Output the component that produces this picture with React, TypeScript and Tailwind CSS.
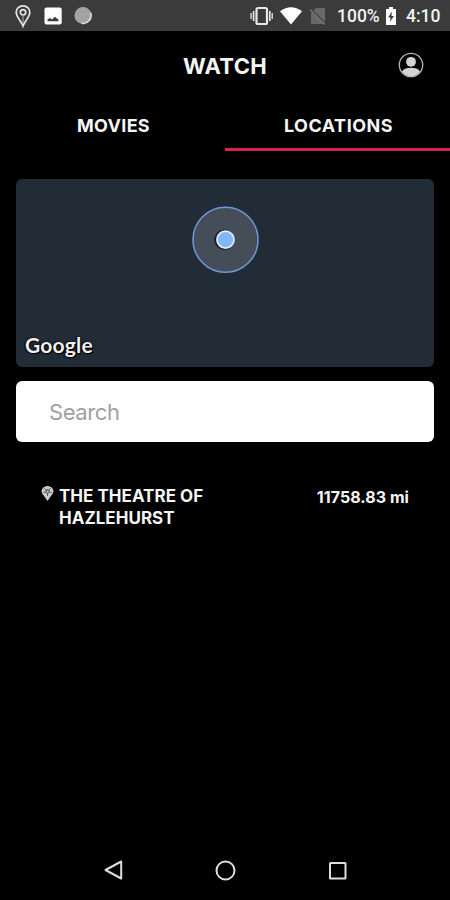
import React from "react";

function StatusBar() {
  return (
    <div className="flex h-[31px] shrink-0 items-center bg-[#3b3b3b] font-['Roboto',sans-serif] text-[17.5px] font-medium text-[#f2f2f2]">
      <svg className="ml-[14px] h-[24px] w-[18px] shrink-0" viewBox="0 0 18 24" fill="none" stroke="#e6e6e6" strokeWidth="1.7">
        <path d="M9 22C7.500 17.500 2.200 13 2.200 8.200a6.800 6.300 0 0 1 13.600 0C15.800 13 10.500 17.500 9 22Z" />
        <circle cx="9" cy="8.300" r="2.700" />
        <path d="M9 12V19" strokeWidth="0.700" />
      </svg>
      <svg className="ml-[12px] h-[18px] w-[18px] shrink-0" viewBox="0 0 18 18">
        <rect x="0.500" y="0.500" width="17.200" height="17" rx="2" fill="#fff" />
        <path d="M3.500 14.200V12.500L6 10.900l2 1.600 2.900-2.800 3.600 3V14.200Z" fill="#3b3b3b" />
      </svg>
      <svg className="ml-[11px] h-[20px] w-[20px] shrink-0" viewBox="0 0 20 20">
        <circle cx="10" cy="9.500" r="8.500" fill="#a3a3a3" />
        <path d="M17.500 6.500A8 8 0 0 1 8.500 17.300" fill="none" stroke="#dedede" strokeWidth="1.500" />
      </svg>
      <svg className="ml-[157px] h-[20px] w-[23px] shrink-0" viewBox="0 0 23 20" fill="none" stroke="#e8e8e8">
        <rect x="6.500" y="2" width="10.500" height="16" rx="1.500" strokeWidth="2.200" />
        <path d="M3.600 5v10M19.800 5v10" strokeWidth="1.600" />
        <path d="M1.100 7v6M22.200 7v6" strokeWidth="1.300" />
      </svg>
      <svg className="ml-[6px] h-[18px] w-[24px] shrink-0" viewBox="0 0 24 18">
        <path d="M1 4.300Q12-4 23 4.300L12 17.500Z" fill="#fff" />
      </svg>
      <svg className="ml-[6px] h-[18px] w-[18px] shrink-0" viewBox="0 0 18 18">
        <path d="M7 1H16V17H2V6Z" fill="#696969" />
        <path d="M1 1.500L17 17.500" stroke="#3b3b3b" strokeWidth="2.200" />
        <path d="M1 2.500L16 17.500" stroke="#777" strokeWidth="1.300" />
      </svg>
      <span className="ml-[10px] w-[44px] whitespace-nowrap leading-5">100%</span>
      <svg className="ml-[4px] h-[20px] w-[12px] shrink-0" viewBox="0 0 12 20">
        <path d="M4 1H8V3H11V19H1V3H4Z" fill="#fff" />
        <path d="M6.800 5.500L3.200 11.400H5.500L5 16 8.900 9.900H6.500Z" fill="#3b3b3b" />
      </svg>
      <span className="ml-[9px] whitespace-nowrap leading-5">4:10</span>
    </div>
  );
}

function Header() {
  return (
    <header className="relative flex h-[70px] shrink-0 items-center justify-center">
      <h1 className="text-[22px] font-bold leading-7 tracking-[0.3px]">WATCH</h1>
      <svg className="absolute right-[26px] top-[21px] h-[26px] w-[26px]" viewBox="0 0 26 26">
        <circle cx="13" cy="13" r="11.700" fill="none" stroke="#b5b5b5" strokeWidth="1.300" />
        <circle cx="13" cy="9.800" r="4.900" fill="#d4d4d4" />
        <path d="M4 19.500C6 16.500 9 15.800 13 15.800S20 16.500 22 19.500C19.500 23 16.500 24.300 13 24.300S6.500 23 4 19.500Z" fill="#d4d4d4" />
      </svg>
    </header>
  );
}

function Tabs() {
  return (
    <nav className="flex h-[50px] shrink-0 text-[18px] font-bold leading-[50px]">
      <div className="w-1/2 border-b-[3px] border-transparent pl-[2px] text-center tracking-[0.3px]">MOVIES</div>
      <div className="w-1/2 border-b-[3px] border-[#d6204e] pl-[2px] text-center tracking-[0.5px]">LOCATIONS</div>
    </nav>
  );
}

function MapCard() {
  return (
    <section className="mx-4 mt-[28px] flex h-[188px] shrink-0 flex-col items-center justify-between rounded-[6px] bg-[#222c37] pt-[27px]">
      <svg className="h-[68px] w-[68px]" viewBox="0 0 68 68">
        <circle cx="34.500" cy="33.800" r="32.500" fill="#454e58" stroke="#7098d4" strokeWidth="1.500" />
        <circle cx="33.500" cy="33.700" r="10.300" fill="#181d24" />
        <circle cx="34.500" cy="33.700" r="8.500" fill="#82b7fc" stroke="#e2eeff" strokeWidth="1.800" />
      </svg>
      <div className="mb-[9px] ml-[9px] self-start font-['Lato',sans-serif] text-[21px] font-bold leading-[26px] tracking-[0.2px] text-[#f0f0f0] [text-shadow:0_0_2px_#000,1px_1px_1px_#000,-1px_0_1px_#000]">
        Google
      </div>
    </section>
  );
}

function LocationRow() {
  return (
    <div className="mt-[43px] flex items-start pl-[41px] pr-[41px] text-[17px] font-bold">
      <svg className="h-[17px] w-[13px] shrink-0" viewBox="0 0 13 17">
        <path d="M6.500 16L1.200 8.500C-.8 4.800 2.600 1 6.500 1S13.800 4.800 11.800 8.500Z" fill="#c9c9c9" />
        <path d="M3.300 3.500L6 6M9.500 3L7 6M2.500 7.500L5.300 7M10.500 7.500L7.800 7M6.500 8v3M6.500 4.500v1" stroke="#404040" strokeWidth="0.800" />
        <circle cx="6.500" cy="6.500" r="1.700" fill="none" stroke="#404040" strokeWidth="0.800" />
      </svg>
      <div className="ml-[5px] whitespace-nowrap leading-[22px] tracking-[0.02px]">
        <div>THE THEATRE OF</div>
        <div>HAZLEHURST</div>
      </div>
      <div className="ml-auto mt-[1px] whitespace-nowrap text-[16px] leading-[22px] tracking-[0.05px]">11758.83 mi</div>
    </div>
  );
}

function NavigationBar() {
  return (
    <div className="mt-auto flex h-[60px] shrink-0 items-center justify-center gap-[88px] pl-px">
      <svg className="h-6 w-6" viewBox="0 0 24 24" fill="none" stroke="#dedede" strokeWidth="2">
        <path d="M19.200 3.500V20.500L3.500 12Z" strokeLinejoin="round" />
      </svg>
      <svg className="h-6 w-6" viewBox="0 0 24 24" fill="none" stroke="#dedede" strokeWidth="2">
        <circle cx="11.500" cy="12.500" r="9" />
      </svg>
      <svg className="h-6 w-6" viewBox="0 0 24 24" fill="none" stroke="#dedede" strokeWidth="2">
        <rect x="4" y="5" width="15.500" height="15.500" rx="0.500" />
      </svg>
    </div>
  );
}

export default function App() {
  return (
    <main className="flex h-[900px] w-[450px] flex-col overflow-hidden bg-black font-['Inter',sans-serif] text-[#f5f5f5]">
      <StatusBar />
      <Header />
      <Tabs />
      <MapCard />
      <input
        className="mx-4 mt-[14px] h-[61px] shrink-0 rounded-[6px] bg-white px-[33px] text-[22px] tracking-[-0.4px] text-black placeholder:text-[#a0a0a0] placeholder:opacity-100"
        placeholder="Search"
        aria-label="Search"
      />
      <LocationRow />
      <NavigationBar />
    </main>
  );
}
